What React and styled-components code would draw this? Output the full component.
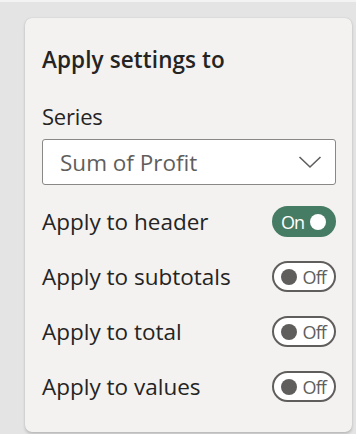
import styled, { createGlobalStyle } from "styled-components";

const Global = createGlobalStyle`
    html, body {
        margin: 0;
        padding: 0;
    }
    body {
        width: 356px;
        height: 434px;
        overflow: hidden;
        background-color: #e4e4e4;
        font-family: "Open Sans", "Noto Sans", sans-serif;
        color: #252423;
    }
`;

const Page = styled.div`
    box-sizing: border-box;
    width: 356px;
    height: 434px;
    border-top: 2px solid #f3f3f3;
    padding: 16px 4px 2px 25px;
`;

const Card = styled.div`
    box-sizing: border-box;
    height: 414px;
    background-color: #f3f2f1;
    border-radius: 7px;
    box-shadow: 0 1.5px 3px rgba(0, 0, 0, 0.18), 0 0 1px rgba(0, 0, 0, 0.12);
    padding: 30px 16px 18px 17px;
    display: flex;
    flex-direction: column;
    & > * {
        flex-shrink: 0;
    }
`;

const Heading = styled.h2`
    margin: 0;
    font-size: 22.5px;
    font-weight: 600;
    line-height: 24px;
    letter-spacing: 0.1px;
`;

const Label = styled.div`
    margin-top: 32px;
    font-size: 22px;
    line-height: 24px;
    letter-spacing: -0.2px;
`;

const Select = styled.div`
    box-sizing: border-box;
    margin-top: 11px;
    height: 46px;
    border: 1.5px solid #8a8886;
    border-radius: 3px;
    background-color: #fff;
    display: flex;
    align-items: center;
    justify-content: space-between;
    padding: 0 13px 0 17px;
    font-size: 22.5px;
    color: #605e5c;
    letter-spacing: 0;
`;

const Rows = styled.div`
    margin-top: 9px;
`;

const Row = styled.div`
    height: 55px;
    display: flex;
    align-items: center;
    justify-content: space-between;
    font-size: 22.5px;
    letter-spacing: 0;
`;

const Toggle = styled.div`
    box-sizing: border-box;
    width: 64px;
    height: 31px;
    border-radius: 16px;
    display: flex;
    align-items: center;
    justify-content: space-between;
    padding: 0 8px 0 7px;
    background-color: ${p => (p.$on ? "#467b64" : "#fff")};
    border: 2px solid ${p => (p.$on ? "#467b64" : "#605e5c")};
    color: ${p => (p.$on ? "#fff" : "#605e5c")};
    font-size: 18px;
    letter-spacing: -0.9px;
    line-height: 1;
`;

const Knob = styled.span`
    flex-shrink: 0;
    width: 16px;
    height: 16px;
    border-radius: 50%;
    background-color: ${p => (p.$on ? "#fff" : "#605e5c")};
`;

const Chevron = () => (
    <svg width="24" height="14" viewBox="0 0 24 14">
        <path d="M1.5 2 L12 12 L22.5 2" fill="none" stroke="#605e5c" strokeWidth="1.6" />
    </svg>
);

const settings = [
    { label: "Apply to header", on: true },
    { label: "Apply to subtotals", on: false },
    { label: "Apply to total", on: false },
    { label: "Apply to values", on: false },
];

const App = () => (
    <>
        <Global />
        <Page>
            <Card>
                <Heading>Apply settings to</Heading>
                <Label>Series</Label>
                <Select>
                    <span>Sum of Profit</span>
                    <Chevron />
                </Select>
                <Rows>
                    {settings.map(s => (
                        <Row key={s.label}>
                            <span>{s.label}</span>
                            {s.on ? (
                                <Toggle $on>
                                    <span>On</span>
                                    <Knob $on />
                                </Toggle>
                            ) : (
                                <Toggle>
                                    <Knob />
                                    <span>Off</span>
                                </Toggle>
                            )}
                        </Row>
                    ))}
                </Rows>
            </Card>
        </Page>
    </>
);

export default App;
